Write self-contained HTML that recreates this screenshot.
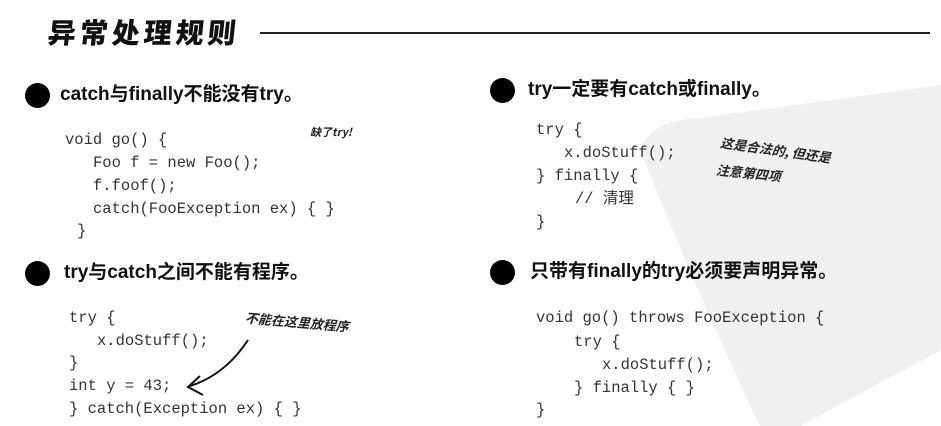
<!DOCTYPE html>
<html><head><meta charset="utf-8"><style>
*{margin:0;padding:0}
body{width:941px;height:426px;background:#fff;position:relative;overflow:hidden;font-family:"Liberation Sans","Noto Sans CJK SC",sans-serif;color:#111}
.a{position:absolute;white-space:nowrap}
.t{font-size:28px;font-weight:900;font-family:"Noto Sans CJK SC",sans-serif;letter-spacing:4px;transform:skewX(-6deg)}
.b{width:25px;height:25px;border-radius:50%;background:#000}
.h{font-size:19px;font-weight:bold;font-family:"Liberation Sans","Noto Sans CJK SC",sans-serif;line-height:22px}
.c{font-family:"Liberation Mono","Noto Sans CJK SC",monospace;font-size:15.5px;color:#333;line-height:18px}
.n{font-family:"Noto Sans CJK SC",sans-serif;font-weight:bold;font-size:13px;font-style:italic;color:#222}
</style></head><body>
<svg class="a" style="left:0;top:0" width="941" height="426"><path d="M640 150 Q650 120 700 118 L941 85 L941 350 L800 426 L760 426 Q700 300 640 150Z" fill="#f0f0f0"/>
<path d="M248 340 Q225 375 190 386" stroke="#111" stroke-width="2" fill="none"/><path d="M200 376 L188 387 L203 395" stroke="#111" stroke-width="2" fill="none"/>
<line x1="260" y1="33" x2="930" y2="33" stroke="#222" stroke-width="2"/></svg>
<div class="a t" style="left:48px;top:12px">异常处理规则</div>
<div class="a b" style="left:25px;top:83px"></div>
<div class="a h" style="left:60px;top:84px">catch与finally不能没有try。</div>
<div class="a c" style="left:65px;top:131px">void go() {</div>
<div class="a c" style="left:93px;top:154px">Foo f = new Foo();</div>
<div class="a c" style="left:93px;top:177px">f.foof();</div>
<div class="a c" style="left:93px;top:200px">catch(FooException ex) { }</div>
<div class="a c" style="left:77px;top:222px">}</div>
<div class="a n" style="left:310px;top:124px;font-size:11px">缺了try!</div>
<div class="a b" style="left:25px;top:261px"></div>
<div class="a h" style="left:64px;top:262px">try与catch之间不能有程序。</div>
<div class="a c" style="left:69px;top:309px">try {</div>
<div class="a c" style="left:97px;top:332px">x.doStuff();</div>
<div class="a c" style="left:69px;top:354px">}</div>
<div class="a c" style="left:69px;top:377px">int y = 43;</div>
<div class="a c" style="left:69px;top:400px">} catch(Exception ex) { }</div>
<div class="a n" style="left:245px;top:312px;transform:rotate(5deg)">不能在这里放程序</div>
<div class="a b" style="left:490px;top:78px"></div>
<div class="a h" style="left:528px;top:79px">try一定要有catch或finally。</div>
<div class="a c" style="left:536px;top:121px">try {</div>
<div class="a c" style="left:564px;top:144px">x.doStuff();</div>
<div class="a c" style="left:536px;top:167px">} finally {</div>
<div class="a c" style="left:575px;top:190px">// 清理</div>
<div class="a c" style="left:536px;top:213px">}</div>
<div class="a n" style="left:720px;top:140px;transform:rotate(8deg)">这是合法的, 但还是</div>
<div class="a n" style="left:716px;top:163px;transform:rotate(6deg)">注意第四项</div>
<div class="a b" style="left:490px;top:260px"></div>
<div class="a h" style="left:530px;top:261px">只带有finally的try必须要声明异常。</div>
<div class="a c" style="left:536px;top:309px">void go() throws FooException {</div>
<div class="a c" style="left:574px;top:333px">try {</div>
<div class="a c" style="left:602px;top:356px">x.doStuff();</div>
<div class="a c" style="left:574px;top:379px">} finally { }</div>
<div class="a c" style="left:536px;top:401px">}</div>
</body></html>
